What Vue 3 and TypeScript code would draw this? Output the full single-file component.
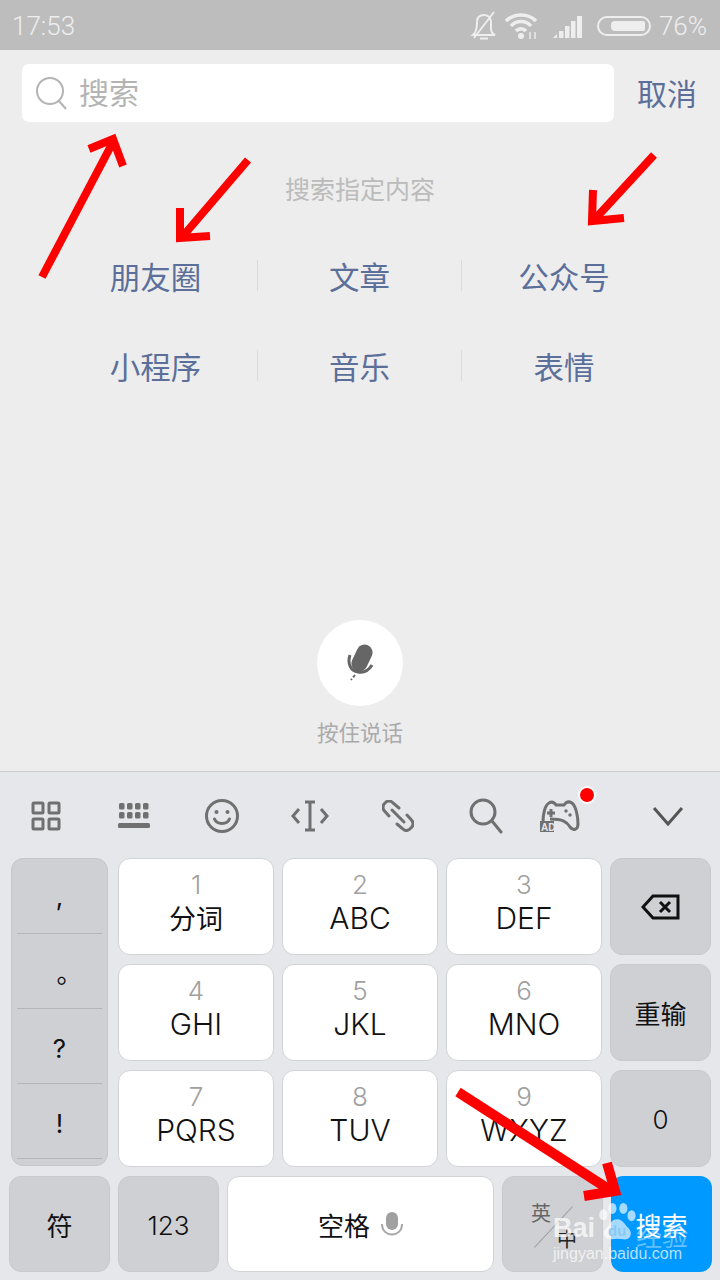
<template>
  <div class="screen">
    <div class="status">
      <span class="time">17:53</span>
      <div class="status-right">
        <svg class="st-bell" width="28" height="30" viewBox="0 0 28 30" fill="none" stroke="#eee" stroke-width="2">
          <path d="M3 24 C7 21 7 15 7 11 C7 6 10 4 14 4 C18 4 20 6 21 10 L21 18 C21 21 23 23 25 24 Z" />
          <path d="M10 27.5 H18" />
          <path d="M24 1 L4 27" />
        </svg>
        <svg class="st-wifi" width="36" height="28" viewBox="0 0 36 28" fill="none" stroke="#eee" stroke-width="3.5">
          <path d="M2 9 C10 1 24 1 32 9" />
          <path d="M7 14 C12 8 22 8 27 14" />
          <path d="M12 19 C15 16 19 16 22 19" />
          <circle cx="17" cy="24" r="3" fill="#eee" stroke="none" />
          <path d="M26 20 V27 M31 20 V27" stroke-width="2" opacity="0.7" />
        </svg>
        <svg class="st-signal" width="32" height="24" viewBox="0 0 32 24" fill="#eee">
          <path d="M0 24 L4 20 V24 Z" />
          <rect x="6" y="17" width="4.5" height="7" />
          <rect x="12" y="12" width="4.5" height="12" />
          <rect x="18" y="7" width="4.5" height="17" />
          <rect x="24" y="2" width="5" height="22" />
        </svg>
        <div class="battery"><i /></div>
        <span class="pct">76%</span>
      </div>
    </div>

    <div class="main">
      <div class="search-row">
        <div class="search-box">
          <svg width="34" height="34" viewBox="0 0 34 34" fill="none" stroke="#b4b4b4" stroke-width="2">
            <circle cx="15" cy="15" r="13" />
            <path d="M24 25 L31 33" />
          </svg>
          <span class="lift">搜索</span>
        </div>
        <span class="cancel">取消</span>
      </div>
      <div class="hint">搜索指定内容</div>
      <div class="types">
        <div v-for="(t, i) in types" :key="t" class="type" :class="{ last: i % 3 === 2 }">
          <span>{{ t }}</span>
        </div>
      </div>
      <div class="voice">
        <div class="mic-circle">
          <svg width="34" height="38" viewBox="0 0 34 38" fill="none">
            <rect x="11" y="0" width="16" height="28" rx="8" transform="rotate(25 19 14)" fill="#666" />
            <path d="M7 11 C4 20 8 27 15 28 C21 29 26 26 29 21" stroke="#666" stroke-width="3" />
            <path d="M12 31 L8 36" stroke="#666" stroke-width="2" stroke-dasharray="3 2" />
          </svg>
        </div>
        <span>按住说话</span>
      </div>
    </div>

    <div class="keyboard">
      <div class="toolbar">
        <div class="tool">
          <svg width="30" height="30" viewBox="0 0 30 30" fill="none" stroke="#707070" stroke-width="3">
            <rect x="2" y="2" width="10" height="10" rx="1" />
            <rect x="18" y="2" width="10" height="10" rx="1" />
            <rect x="2" y="18" width="10" height="10" rx="1" />
            <rect x="18" y="18" width="10" height="10" rx="1" />
          </svg>
        </div>
        <div class="tool">
          <svg width="32" height="26" viewBox="0 0 32 26" fill="#707070">
            <rect v-for="c in dots" :key="c[0] + '-' + c[1]" :x="c[0]" :y="c[1]" width="5.5" height="6.5" rx="1.5" />
            <rect x="0" y="20" width="32" height="5" rx="1.5" />
          </svg>
        </div>
        <div class="tool">
          <svg width="36" height="36" viewBox="0 0 36 36" fill="none" stroke="#707070" stroke-width="3">
            <circle cx="18" cy="18" r="15.5" />
            <circle cx="12.5" cy="14" r="2" fill="#707070" stroke="none" />
            <circle cx="23.5" cy="14" r="2" fill="#707070" stroke="none" />
            <path d="M10.5 21 C13 27 23 27 25.5 21" stroke-linecap="round" />
          </svg>
        </div>
        <div class="tool">
          <svg width="38" height="32" viewBox="0 0 38 32" fill="none" stroke="#707070" stroke-width="3">
            <path d="M8 9 L2 16 L8 23 M30 9 L36 16 L30 23" />
            <path d="M19 2 V30 M14 2 H24 M14 30 H24" />
          </svg>
        </div>
        <div class="tool">
          <svg width="32" height="32" viewBox="0 0 32 32" fill="none" stroke="#707070" stroke-width="3" stroke-linecap="round">
            <path d="M7 16 L2.5 11 C0 8 1 5 3 3 C6 0 9 1 11 3 L17 8" />
            <path d="M25 15 L29.5 20 C32 23 31 26 29 28 C26 31 23 31 21 29 L15 24" />
            <path d="M10 10 L22 22" />
          </svg>
        </div>
        <div class="tool">
          <svg width="36" height="36" viewBox="0 0 36 36" fill="none" stroke="#707070" stroke-width="3">
            <circle cx="15" cy="14" r="12" />
            <path d="M24 23 L33 34" stroke-linecap="round" />
          </svg>
        </div>
        <div class="tool game">
          <svg width="40" height="32" viewBox="0 0 40 32" fill="none" stroke="#707070" stroke-width="3">
            <path d="M3 22 C3 14 5 5 9 3 C12 1 14 2 16 5 H24 C26 2 29 1 32 3 C36 6 38 17 38 24 C38 30 33 31 30 27 C27 22 23 19 10 19" />
            <path d="M7 13 H15 M11 9 V17" />
            <circle cx="26" cy="11" r="1.7" fill="#707070" stroke="none" />
            <circle cx="30" cy="15" r="1.7" fill="#707070" stroke="none" />
            <rect x="0" y="21" width="14" height="11" fill="#707070" stroke="none" />
          </svg>
          <span class="ad">AD</span>
          <i class="dot" />
        </div>
        <div class="tool last">
          <svg width="32" height="20" viewBox="0 0 32 20" fill="none" stroke="#555" stroke-width="3">
            <path d="M2 2 L16 18 L30 2" />
          </svg>
        </div>
      </div>

      <div class="keys">
        <div class="punct">
          <div v-for="p in puncts" :key="p" class="punct-cell">{{ p }}</div>
        </div>
        <div class="nums">
          <div v-for="k in numKeys" :key="k.n" class="key white num-key">
            <span class="digit">{{ k.n }}</span>
            <span class="letters" :class="{ 'letters-cn': k.n === 1 }">{{ k.t }}</span>
          </div>
        </div>
        <div class="side">
          <div class="key grey">
            <svg width="40" height="28" viewBox="0 0 40 28" fill="none" stroke="#111" stroke-width="3">
              <path d="M12 3 H37 V25 H12 L2 14 Z" />
              <path d="M19 9 L29 19 M29 9 L19 19" />
            </svg>
          </div>
          <div class="key grey cn">重输</div>
          <div class="key grey zero">0</div>
        </div>
      </div>

      <div class="bottom">
        <div class="key grey b1 cn">符</div>
        <div class="key grey b2 zero">123</div>
        <div class="key white b3">
          <span class="cn">空格</span>
          <svg width="22" height="24" viewBox="0 0 22 24" fill="none">
            <rect x="5" y="0" width="12" height="18" rx="6" fill="#a0a0a0" />
            <path d="M1 12 C1 26 21 26 21 12" stroke="#a8a8a8" stroke-width="2" />
          </svg>
        </div>
        <div class="key grey b4">
          <span class="ying">英</span>
          <span class="slash" />
          <span class="zhong">中</span>
        </div>
        <div class="key blue b5">搜索</div>
      </div>
    </div>

    <!-- markup drawn on top of the screenshot -->
    <svg class="arrows" width="720" height="1280" viewBox="0 0 720 1280" fill="none" stroke="#ff0000">
      <g stroke-width="8">
        <path d="M42 277 L113 142" />
        <path d="M89 149 L113 139 L123 166" />
        <path d="M248 160 L183 236" />
        <path d="M180 208 L180 238 L210 236" />
        <path d="M654 155 L595 219" />
        <path d="M593 190 L592 221 L624 218" />
      </g>
      <g stroke-width="10">
        <path d="M458 1092 L610 1190" />
        <path d="M607 1163 L615 1191 L584 1196" />
      </g>
    </svg>

    <div class="watermark">
      <div class="wm-top">
        <span class="wm-bai">Bai</span>
        <div class="wm-paw">
          <svg width="40" height="40" viewBox="0 0 42 44" fill="#ffffff">
            <ellipse cx="6" cy="13" rx="4.5" ry="6" />
            <ellipse cx="16" cy="6" rx="4.5" ry="6" />
            <ellipse cx="28" cy="6" rx="4.5" ry="6" />
            <ellipse cx="37" cy="14" rx="4.5" ry="6" />
            <path d="M21 18 C14 18 13 25 8 29 C4 34 8 41 15 40 C19 39 24 39 28 40 C35 41 39 34 34 28 C29 24 28 18 21 18 Z" />
          </svg>
          <span class="wm-du">du</span>
        </div>
        <span class="wm-cn">经验</span>
      </div>
      <div class="wm-url">jingyan.baidu.com</div>
    </div>
  </div>
</template>

<script setup lang="ts">
const types: string[] = ['朋友圈', '文章', '公众号', '小程序', '音乐', '表情']
const puncts: string[] = [',', '。', '?', '!']
const numKeys: { n: number; t: string }[] = [
  { n: 1, t: '分词' },
  { n: 2, t: 'ABC' },
  { n: 3, t: 'DEF' },
  { n: 4, t: 'GHI' },
  { n: 5, t: 'JKL' },
  { n: 6, t: 'MNO' },
  { n: 7, t: 'PQRS' },
  { n: 8, t: 'TUV' },
  { n: 9, t: 'WXYZ' },
]
const dots: number[][] = []
for (let y = 0; y < 2; y++) {
  for (let x = 0; x < 4; x++) {
    dots.push([1 + x * 8, y * 9])
  }
}
</script>

<style>
html,
body {
  margin: 0;
  background: #ededed;
}
</style>

<style scoped>
.screen {
  position: relative;
  width: 720px;
  height: 1280px;
  overflow: hidden;
  display: flex;
  flex-direction: column;
  background: #ededed;
  font-family: "Liberation Sans", "Noto Sans CJK SC", sans-serif;
}

.status {
  flex: 0 0 50px;
  display: flex;
  align-items: center;
  justify-content: space-between;
  padding: 1px 13px 0 12px;
  box-sizing: border-box;
  background: #bdbdbd;
  color: #eeeeee;
  font-family: Roboto, "Liberation Sans", sans-serif;
  font-weight: 300;
  font-size: 26px;
}
.status-right {
  display: flex;
  align-items: center;
}
.st-wifi {
  margin-left: 6px;
}
.st-signal {
  margin-left: 13px;
}
.battery {
  width: 54px;
  height: 20px;
  margin: 0 8px 0 12px;
  padding: 3px 4px;
  box-sizing: border-box;
  display: flex;
  justify-content: flex-end;
  border: 2px solid #eee;
  border-radius: 10px;
}
.battery i {
  display: block;
  width: 34px;
  background: #eee;
  border-radius: 4px 2px 2px 4px;
}

.main {
  flex: 0 0 721px;
  display: flex;
  flex-direction: column;
}
.search-row {
  display: flex;
  align-items: center;
  padding: 14px 0 0 22px;
}
.search-box {
  width: 592px;
  height: 58px;
  display: flex;
  align-items: center;
  gap: 10px;
  padding-left: 13px;
  box-sizing: border-box;
  background: #fff;
  border-radius: 7px;
  color: #b4b4b4;
  font-family: "Noto Sans CJK SC", sans-serif;
  font-size: 30px;
}
.lift {
  margin-bottom: 4px;
}
.cancel {
  margin: 0 0 2px 23px;
  color: #5b6f9a;
  font-family: "Noto Sans CJK SC", sans-serif;
  font-size: 30px;
}
.hint {
  margin-top: 48px;
  text-align: center;
  color: #bbbbbb;
  font-family: "Noto Sans CJK SC", sans-serif;
  font-size: 25px;
  line-height: 36px;
}
.types {
  width: 612px;
  margin: 54px auto 0;
  display: grid;
  grid-template-columns: repeat(3, 204px);
  row-gap: 59px;
}
.type {
  height: 31px;
  display: flex;
  align-items: center;
  justify-content: center;
  border-right: 1px solid #dcdcdc;
  box-sizing: border-box;
  color: #5b6f9a;
  font-family: "Noto Sans CJK SC", sans-serif;
  font-size: 30.5px;
}
.type.last {
  border-right: none;
}
.voice {
  margin-top: 239px;
  display: flex;
  flex-direction: column;
  align-items: center;
  color: #aaaaaa;
  font-family: "Noto Sans CJK SC", sans-serif;
  font-size: 21.5px;
}
.mic-circle {
  width: 86px;
  height: 86px;
  border-radius: 50%;
  background: #fff;
  display: flex;
  align-items: center;
  justify-content: center;
  margin-bottom: 10px;
}

.keyboard {
  flex: 1;
  display: flex;
  flex-direction: column;
  background: #e6e7eb;
  border-top: 1px solid #cccccc;
}
.toolbar {
  flex: 0 0 86px;
  display: flex;
  padding: 2px 0 0 2px;
  box-sizing: border-box;
}
.tool {
  position: relative;
  width: 88px;
  display: flex;
  align-items: center;
  justify-content: center;
}
.tool.last {
  width: 100px;
}
.game svg {
  margin-right: 28px;
}
.ad {
  position: absolute;
  left: 11px;
  top: 48px;
  color: #e6e7eb;
  font-size: 10px;
  font-weight: 700;
  line-height: 11px;
}
.dot {
  position: absolute;
  left: 48px;
  top: 12px;
  width: 18px;
  height: 18px;
  background: #ff0000;
  border: 2px solid #fff;
  border-radius: 50%;
  box-sizing: border-box;
}

.keys {
  display: flex;
  padding-left: 11px;
}
.punct {
  width: 97px;
  height: 308px;
  margin-right: 10px;
  padding: 0 5px 8px;
  box-sizing: border-box;
  background: #cfd0d4;
  border: 1px solid #c6c7cb;
  border-radius: 12px;
}
.punct-cell {
  height: 75px;
  display: flex;
  align-items: center;
  justify-content: center;
  box-sizing: border-box;
  border-bottom: 1px solid #b4b5b9;
  color: #111;
  font-size: 26px;
  font-family: Inter, "Liberation Sans", "Noto Sans CJK SC", sans-serif;
}
.punct-cell:nth-child(2) {
  padding-left: 20px;
}
.punct-cell:nth-child(3),
.punct-cell:nth-child(4) {
  padding-top: 5px;
}
.nums {
  display: grid;
  grid-template-columns: repeat(3, 156px);
  grid-auto-rows: 97px;
  gap: 9px 8px;
}
.side {
  display: grid;
  grid-auto-rows: 97px;
  row-gap: 9px;
  width: 101px;
  margin-left: 8px;
}
.key {
  box-sizing: border-box;
  border-radius: 12px;
  display: flex;
  align-items: center;
  justify-content: center;
  color: #111;
}
.white {
  background: #fff;
  border: 1px solid #d2d3d7;
}
.grey {
  background: #cfd0d4;
  border: 1px solid #c8c9cd;
}
.num-key {
  flex-direction: column;
  padding-bottom: 7px;
  font-family: Inter, "Liberation Sans", "Noto Sans CJK SC", sans-serif;
  font-weight: 300;
}
.digit {
  color: #a0a0a0;
  font-size: 26px;
  line-height: 30px;
}
.letters {
  font-size: 30px;
  line-height: 36px;
}
.letters-cn {
  font-family: "Noto Sans CJK SC", sans-serif;
  font-size: 27px;
  font-weight: 400;
}
.cn {
  font-family: "Noto Sans CJK SC", sans-serif;
  font-size: 26px;
}
.zero {
  padding-top: 2px;
  font-family: Inter, "Liberation Sans", sans-serif;
  font-weight: 300;
  font-size: 26px;
}

.bottom {
  display: flex;
  gap: 8px;
  margin-top: 9px;
  padding-left: 9px;
  height: 96px;
}
.b1 {
  width: 101px;
}
.b2 {
  width: 101px;
}
.b3 {
  width: 267px;
  gap: 11px;
}
.b4 {
  position: relative;
  width: 101px;
}
.b5 {
  width: 101px;
  background: #0099ff;
  color: #fff;
  font-family: "Noto Sans CJK SC", sans-serif;
  font-size: 26px;
}
.ying {
  position: absolute;
  left: 28px;
  top: 22px;
  color: #666;
  font-family: "Noto Sans CJK SC", sans-serif;
  font-size: 20px;
  line-height: 28px;
}
.zhong {
  position: absolute;
  left: 54px;
  top: 48px;
  color: #222;
  font-family: "Noto Sans CJK SC", sans-serif;
  font-size: 20px;
  line-height: 28px;
}
.slash {
  position: absolute;
  left: 50px;
  top: 22px;
  width: 1px;
  height: 56px;
  background: #999;
  transform: rotate(43deg);
}

.arrows {
  position: absolute;
  left: 0;
  top: 0;
  pointer-events: none;
}
.watermark {
  position: absolute;
  left: 553px;
  top: 1203px;
  width: 140px;
  color: rgba(255, 255, 255, 0.72);
}
.wm-top {
  display: flex;
  align-items: flex-end;
  height: 40px;
  white-space: nowrap;
}
.wm-bai {
  width: 44px;
  font-size: 27px;
  font-weight: 700;
  line-height: 28px;
  position: relative;
  top: -1px;
}
.wm-paw {
  position: relative;
  width: 39px;
  height: 40px;
}
.wm-paw svg {
  opacity: 0.65;
}
.wm-du {
  position: absolute;
  left: 11px;
  top: 19px;
  color: #8cc8f0;
  font-size: 15px;
  font-weight: 700;
}
.wm-cn {
  position: relative;
  top: 7px;
  font-family: "Noto Sans CJK SC", sans-serif;
  font-size: 26px;
  line-height: 30px;
  opacity: 0.55;
}
.wm-url {
  margin-top: 2px;
  font-size: 16px;
  line-height: 18px;
  white-space: nowrap;
}
</style>
